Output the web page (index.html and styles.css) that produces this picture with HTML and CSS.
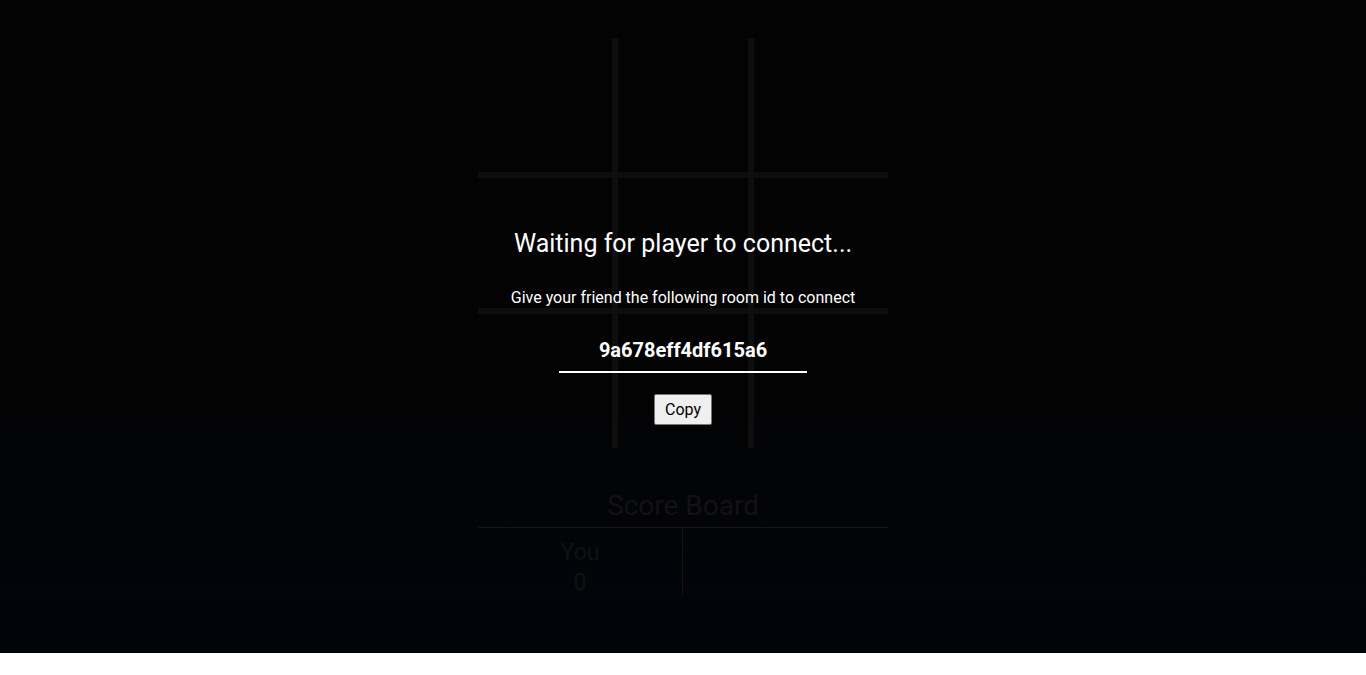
FILE: index.html
```html
<!DOCTYPE html>
<html lang="en">
<head>
<meta charset="utf-8">
<title>Tic Tac Toe</title>
<link rel="stylesheet" href="styles.css">
</head>
<body>
<div class="app">
  <div class="board">
    <div class="cell c-r c-b"></div>
    <div class="cell c-r c-b"></div>
    <div class="cell c-b"></div>
    <div class="cell c-r c-b"></div>
    <div class="cell c-r c-b"></div>
    <div class="cell c-b"></div>
    <div class="cell c-r"></div>
    <div class="cell c-r"></div>
    <div class="cell"></div>
  </div>
  <div class="scoreboard">
    <h2 class="score-title">Score Board</h2>
    <div class="score-row">
      <div class="score-col score-left">
        <div class="score-name">You</div>
        <div class="score-value">0</div>
      </div>
      <div class="score-col"></div>
    </div>
  </div>
  <div class="overlay">
    <h1 class="wait-title">Waiting for player to connect...</h1>
    <p class="wait-sub">Give your friend the following room id to connect</p>
    <div class="room-id">9a678eff4df615a6</div>
    <button class="copy-btn" type="button">Copy</button>
  </div>
</div>
</body>
</html>
```
FILE: styles.css
```css
* { box-sizing: border-box; }
html, body { margin: 0; padding: 0; background: #ffffff; }
body { font-family: Roboto, "Liberation Sans", Arial, sans-serif; }

.app {
  position: relative;
  display: flex;
  flex-direction: column;
  align-items: center;
  padding: 38px 0 58px;
  background: linear-gradient(#030304 0%, #030304 60%, #01050a 100%);
}

.board {
  display: grid;
  grid-template-columns: 140px 136px 134px;
  grid-template-rows: 140px 136px 134px;
  width: 410px;
}
.c-r { border-right: 6px solid #0e0e0e; }
.c-b { border-bottom: 6px solid #0e0e0e; }

.scoreboard { width: 410px; margin-top: 41px; }
.score-title {
  margin: 0;
  font-size: 28px;
  font-weight: 400;
  line-height: 33px;
  text-align: center;
  color: #121212;
  padding-bottom: 5px;
  border-bottom: 1px solid #141414;
}
.score-row { display: flex; }
.score-col {
  width: 205px;
  height: 67px;
  padding-top: 10px;
  text-align: center;
  color: #111111;
  font-size: 23px;
  line-height: 30px;
}
.score-left { border-right: 1px solid #141414; }

.overlay {
  position: absolute;
  inset: 0;
  display: flex;
  flex-direction: column;
  align-items: center;
  justify-content: center;
  color: #ffffff;
}
.wait-title {
  margin: 0;
  font-size: 25px;
  font-weight: 400;
  line-height: 29px;
}
.wait-sub {
  margin: 30px 0 0;
  font-size: 16px;
  line-height: 19px;
}
.room-id {
  margin-top: 23px;
  width: 248px;
  padding: 8px 0 9px;
  font-size: 20px;
  font-weight: 700;
  line-height: 24px;
  text-align: center;
  border-bottom: 2px solid #ffffff;
}
.copy-btn {
  margin-top: 21px;
  font-family: Roboto, "Liberation Sans", Arial, sans-serif;
  font-size: 16px;
  line-height: 19px;
  padding: 5px 10px;
  color: #000000;
  background: #efefef;
  border: 1px solid #767676;
  border-radius: 2px;
}
```
